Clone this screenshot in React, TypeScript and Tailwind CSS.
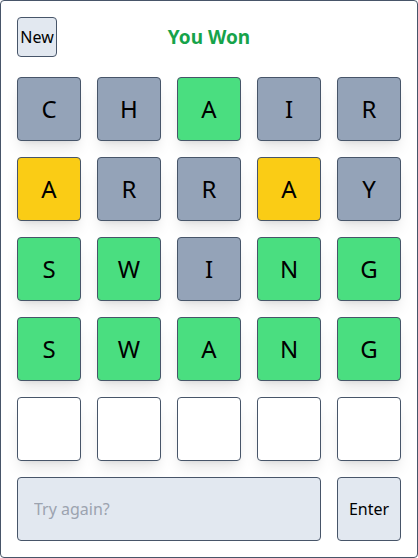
const rows: { letter: string; state: "gray" | "green" | "yellow" | "empty" }[][] = [
  [
    { letter: "C", state: "gray" },
    { letter: "H", state: "gray" },
    { letter: "A", state: "green" },
    { letter: "I", state: "gray" },
    { letter: "R", state: "gray" },
  ],
  [
    { letter: "A", state: "yellow" },
    { letter: "R", state: "gray" },
    { letter: "R", state: "gray" },
    { letter: "A", state: "yellow" },
    { letter: "Y", state: "gray" },
  ],
  [
    { letter: "S", state: "green" },
    { letter: "W", state: "green" },
    { letter: "I", state: "gray" },
    { letter: "N", state: "green" },
    { letter: "G", state: "green" },
  ],
  [
    { letter: "S", state: "green" },
    { letter: "W", state: "green" },
    { letter: "A", state: "green" },
    { letter: "N", state: "green" },
    { letter: "G", state: "green" },
  ],
  [
    { letter: "", state: "empty" },
    { letter: "", state: "empty" },
    { letter: "", state: "empty" },
    { letter: "", state: "empty" },
    { letter: "", state: "empty" },
  ],
];

const tileColor = {
  gray: "bg-[#94a3b8]",
  green: "bg-[#4ade80]",
  yellow: "bg-[#facc15]",
  empty: "bg-white",
};

export default function App() {
  return (
    <div
      className="w-[418px] h-[558px] border border-[#475569] rounded bg-white p-4 flex flex-col"
      style={{ fontFamily: '"Noto Sans", sans-serif' }}
    >
      <div className="grid grid-cols-5 gap-4 items-center h-10 mb-5">
        <button className="w-10 h-10 bg-[#e2e8f0] border border-[#475569] rounded text-base text-black">
          New
        </button>
        <h1 className="col-span-3 text-center text-[19px] font-bold text-[#16a34a]">You Won</h1>
      </div>

      <div className="flex flex-col gap-4">
        {rows.map((row, i) => (
          <div key={i} className="grid grid-cols-5 gap-4">
            {row.map((t, j) => (
              <div
                key={j}
                className={`h-16 w-16 ${tileColor[t.state]} border border-[#475569] rounded shadow-lg flex items-center justify-center text-2xl text-black`}
              >
                {t.letter}
              </div>
            ))}
          </div>
        ))}
      </div>

      <div className="flex gap-4 mt-4">
        <input
          className="h-16 flex-1 bg-[#e2e8f0] border border-[#475569] rounded px-4 text-base placeholder:text-[#9ca3af] outline-none"
          placeholder="Try again?"
        />
        <button className="h-16 w-16 bg-[#e2e8f0] border border-[#475569] rounded text-base text-black">
          Enter
        </button>
      </div>
    </div>
  );
}
